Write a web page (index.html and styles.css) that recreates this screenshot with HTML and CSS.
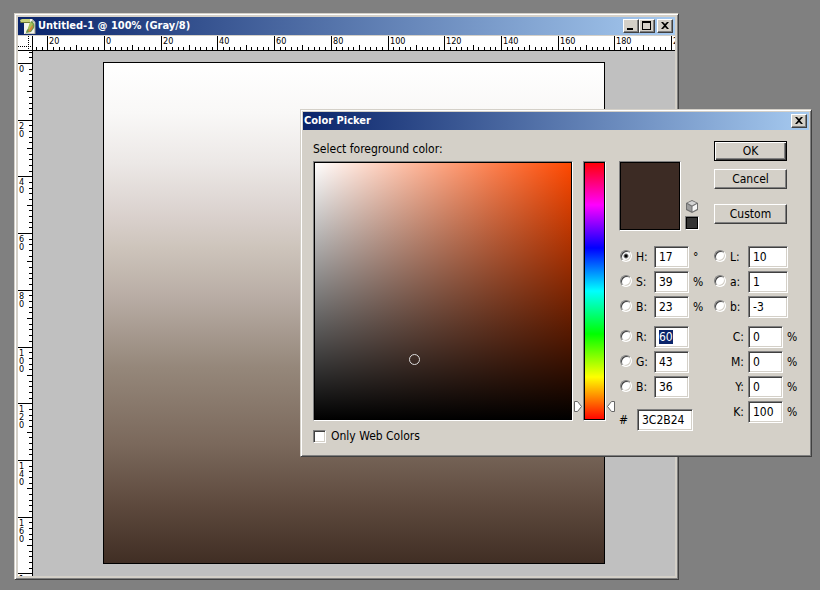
FILE: index.html
```html
<!DOCTYPE html>
<html lang="en">
<head>
<meta charset="utf-8">
<title>Untitled-1 @ 100% (Gray/8)</title>
<link rel="stylesheet" href="styles.css">
</head>
<body>
<main class="desktop">
  <section class="window document" aria-label="Untitled-1">
    <header class="titlebar">
      <svg class="doc-icon" viewBox="0 0 16 16" aria-hidden="true">
        <path d="M4 1h8l3 3v12H4z" fill="#f4f4ec"/>
        <path d="M12 1v3h3z" fill="#b9bba8"/>
        <path d="M15 4v12H5" fill="none" stroke="#9a9a8c"/>
        <path d="M0 2l2-1h8v4H1z" fill="#c9d27c"/>
        <path d="M0 4h10v1H1z" fill="#6f7c35"/>
        <path d="M11 3c3 1 4 4 3 7l-3 4-5 1c0-3 2-4 3-6z" fill="#6f9a48"/>
        <path d="M12 6l1 3-3 5-2-1z" fill="#d9823a"/>
        <path d="M10 4l3 2-4 6-1-2z" fill="#a9c258"/>
      </svg>
      <h1 class="caption">Untitled-1 @ 100% (Gray/8)</h1>
      <div class="caption-buttons">
        <button class="caption-button" aria-label="Minimize"><svg viewBox="0 0 12 10"><path d="M2 7h6v2H2z"/></svg></button>
        <button class="caption-button" aria-label="Maximize"><svg viewBox="0 0 12 10"><path d="M1 0h9v9H1zM2 2v6h7V2z" fill-rule="evenodd"/></svg></button>
        <button class="caption-button close" aria-label="Close"><svg viewBox="0 0 12 10"><path d="M2 1h2l2 2 2-2h2L7 4.500l3 3.500H8L6 6 4 8H2l3-3.500z"/></svg></button>
      </div>
    </header>
    <div class="workspace">
      <div class="ruler-corner"></div>
      <svg class="ruler" id="ruler-x" aria-hidden="true"></svg>
      <svg class="ruler" id="ruler-y" aria-hidden="true"></svg>
      <div class="pasteboard"><div class="artwork"></div></div>
    </div>
  </section>

  <section class="window dialog" role="dialog" aria-labelledby="picker-title">
    <header class="titlebar">
      <h2 class="caption" id="picker-title">Color Picker</h2>
      <div class="caption-buttons">
        <button class="caption-button close" aria-label="Close"><svg viewBox="0 0 12 10"><path d="M2 1h2l2 2 2-2h2L7 4.500l3 3.500H8L6 6 4 8H2l3-3.500z"/></svg></button>
      </div>
    </header>
    <form class="picker">
      <div class="selectors">
        <p class="prompt">Select foreground color:</p>
        <div class="color-field well"><span class="marker"></span></div>
        <div class="hue">
          <input class="hue-slider well" type="range" min="0" max="360" value="17" aria-label="Hue">
          <svg class="pointer pointer-left" viewBox="0 0 8 11"><path d="M.5.5h3l4 5-4 5h-3z"/></svg>
          <svg class="pointer pointer-right" viewBox="0 0 8 11"><path d="M7.500.5h-3l-4 5 4 5h3z"/></svg>
        </div>
        <label class="web-only"><input class="checkbox" type="checkbox">Only Web Colors</label>
      </div>

      <div class="details">
        <div class="preview">
          <div class="swatch well"></div>
          <div class="web-safe">
            <svg class="cube" viewBox="0 0 12 13" aria-hidden="true">
              <path d="M6 0l6 3v7l-6 3-6-3V3z" fill="#707070"/>
              <path d="M6 1l4.500 2L6 5.500 1.500 3z" fill="#d4d4d4"/>
              <path d="M1 4l4.500 2.500v5L1 9z" fill="#9c9c9c"/>
              <path d="M6.500 6.500L11 4v5l-4.500 2.500z" fill="#f6f6f6"/>
            </svg>
            <div class="safe-swatch well"></div>
          </div>
        </div>
        <div class="actions">
          <button class="button default" type="button">OK</button>
          <button class="button" type="button">Cancel</button>
          <button class="button custom" type="button">Custom</button>
        </div>

        <div class="channels">
          <div class="channel"><input class="radio" type="radio" name="axis" aria-label="Hue axis" checked><label for="h">H:</label><input class="value" id="h" value="17"><span>°</span></div>
          <div class="channel"><input class="radio" type="radio" name="axis" aria-label="Saturation axis"><label for="s">S:</label><input class="value" id="s" value="39"><span>%</span></div>
          <div class="channel"><input class="radio" type="radio" name="axis" aria-label="Brightness axis"><label for="v">B:</label><input class="value" id="v" value="23"><span>%</span></div>
          <div class="channel group-start"><input class="radio" type="radio" name="axis" aria-label="Red axis"><label for="r">R:</label><input class="value" id="r" value="60"></div>
          <div class="channel"><input class="radio" type="radio" name="axis" aria-label="Green axis"><label for="g">G:</label><input class="value" id="g" value="43"></div>
          <div class="channel"><input class="radio" type="radio" name="axis" aria-label="Blue axis"><label for="b">B:</label><input class="value" id="b" value="36"></div>
          <div class="hex"><label for="hex">#</label><input class="value" id="hex" value="3C2B24"></div>
        </div>
        <div class="channels">
          <div class="channel lab"><input class="radio" type="radio" name="axis" aria-label="Lightness axis"><label for="l">L:</label><input class="value" id="l" value="10"></div>
          <div class="channel lab"><input class="radio" type="radio" name="axis" aria-label="a axis"><label for="la">a:</label><input class="value" id="la" value="1"></div>
          <div class="channel lab"><input class="radio" type="radio" name="axis" aria-label="b axis"><label for="lb">b:</label><input class="value" id="lb" value="-3"></div>
          <div class="channel ink group-start"><label for="c">C:</label><input class="value" id="c" value="0"><span>%</span></div>
          <div class="channel ink"><label for="m">M:</label><input class="value" id="m" value="0"><span>%</span></div>
          <div class="channel ink"><label for="y">Y:</label><input class="value" id="y" value="0"><span>%</span></div>
          <div class="channel ink"><label for="k">K:</label><input class="value" id="k" value="100"><span>%</span></div>
        </div>
      </div>
    </form>
  </section>
</main>
<script src="script.js"></script>
</body>
</html>
```
FILE: styles.css
```css
* { box-sizing: border-box; }

:root {
  --face: #d4d0c8;
  --shade: #808080;
  --dark: #404040;
}

body {
  margin: 0;
  background: #808080;
  color: #000;
  font: 12px/16px "DejaVu Sans Condensed", "Noto Sans", sans-serif;
}

h1, h2, p { margin: 0; }

button, input { font: inherit; color: inherit; }

.desktop {
  position: relative;
  min-height: 100vh;
  overflow: hidden;
}

/* Window frames */
.window {
  position: absolute;
  background: var(--face);
  border: 1px solid;
  border-color: var(--face) var(--dark) var(--dark) var(--face);
  box-shadow: inset 1px 1px #fff, inset -1px -1px var(--shade);
}

.document {
  inset: 13px 141px 10px 14px;
  display: flex;
  flex-direction: column;
  padding: 3px;
}

.dialog {
  left: 300px;
  top: 109px;
  padding: 2px;
}

.titlebar {
  display: flex;
  align-items: center;
  height: 18px;
  padding: 0 2px 0 1px;
  background: linear-gradient(90deg, #0a246a, #a6caf0);
}

.caption {
  flex: 1;
  color: #fff;
  font-size: 11px;
  line-height: 18px;
  font-weight: bold;
}

.doc-icon {
  width: 16px;
  height: 16px;
  margin: 0 2px 0 1px;
}

.caption-buttons { display: flex; }

.caption-button {
  width: 16px;
  height: 14px;
  padding: 1px;
  background: var(--face);
  border: 1px solid;
  border-color: #fff var(--dark) var(--dark) #fff;
  box-shadow: inset -1px -1px var(--shade);
}

.caption-button svg {
  display: block;
  width: 12px;
  height: 10px;
}

.caption-button + .close { margin-left: 2px; }

/* Document */
.workspace {
  flex: 1;
  display: grid;
  grid-template: 15px minmax(0, 1fr) / 15px minmax(0, 1fr);
  margin-top: 1px;
  overflow: hidden;
}

.ruler,
.ruler-corner {
  width: 100%;
  height: 100%;
  background: #fff;
}

.ruler {
  font-size: 9px;
  shape-rendering: crispEdges;
}

#ruler-x, .ruler-corner { border-bottom: 1px solid #000; }
#ruler-y, .ruler-corner { border-right: 1px solid #000; }

.ruler-corner {
  background:
    repeating-linear-gradient(90deg, #000 0 1px, #fff 1px 2px) 0 10px / 100% 1px no-repeat,
    repeating-linear-gradient(#000 0 1px, #fff 1px 2px) 10px 0 / 1px 100% no-repeat,
    #fff;
}

.pasteboard {
  padding: 11px 70px;
  background: #c0c0c0;
}

.artwork {
  height: 502px;
  border: 1px solid #000;
  background: linear-gradient(#fff, #f9f8f7 10%, #ece8e6 20%, #d9d0cc 31%, #cdc4bb 37%, #b8aca4 47%, #95877a 61%, #7b695c 76%, #5c483c 89%, #402e24);
}

/* Picker */
.well {
  border: 1px solid;
  border-color: var(--shade) #fff #fff var(--shade);
  box-shadow: inset 0 0 0 1px #000;
}

.picker {
  display: flex;
  gap: 13px;
  padding: 10px 21px 10px 10px;
}

.selectors {
  display: grid;
  grid-template-columns: 260px 23px;
  column-gap: 10px;
  align-content: start;
}

.prompt,
.web-only { grid-column: 1 / -1; }

.prompt {
  height: 21px;
  line-height: 18px;
}

.color-field {
  position: relative;
  height: 260px;
  background: linear-gradient(transparent, #000), linear-gradient(90deg, #fff, #ff4800);
}

.marker {
  position: absolute;
  left: 39%;
  top: 77%;
  width: 11px;
  height: 11px;
  margin: -7px -6px;
  border: 1px solid #ddd;
  border-radius: 50%;
}

.hue { position: relative; }

.hue-slider {
  display: block;
  appearance: none;
  writing-mode: vertical-lr;
  direction: rtl;
  width: 100%;
  height: 260px;
  margin: 0;
  background: linear-gradient(#f00, #f0f, #00f, #0ff, #0f0, #ff0, #f00);
}

.hue-slider::-webkit-slider-thumb {
  appearance: none;
  opacity: 0;
}

.pointer {
  position: absolute;
  top: 240px;
  width: 8px;
  height: 11px;
  fill: #fff;
  stroke: #666;
}

.pointer-left { left: -9px; }
.pointer-right { right: -9px; }

.web-only {
  display: flex;
  align-items: center;
  gap: 5px;
  margin-top: 7px;
}

.checkbox {
  appearance: none;
  width: 13px;
  height: 13px;
  margin: 0;
}

.checkbox,
.value {
  background: #fff;
  border: 1px solid;
  border-color: var(--shade) #fff #fff var(--shade);
  border-radius: 0;
  box-shadow: inset 1px 1px var(--dark), inset -1px -1px var(--face);
}

.details {
  display: grid;
  grid-template-columns: 95px 74px;
  align-content: start;
  row-gap: 22px;
  margin-top: 1px;
}

.preview {
  display: flex;
  align-items: flex-end;
  gap: 4px;
  padding-top: 20px;
  height: 90px;
}

.swatch {
  width: 62px;
  height: 70px;
  background: #3c2b24;
}

.web-safe {
  display: grid;
  justify-items: center;
  gap: 3px;
}

.cube {
  width: 12px;
  height: 13px;
}

.safe-swatch {
  width: 14px;
  height: 14px;
  background: #333;
}

.web-safe, .actions { margin-bottom: 1px; }

.actions {
  display: flex;
  flex-direction: column;
  gap: 8px;
}

.button {
  width: 73px;
  height: 20px;
  padding: 0;
  line-height: 16px;
  background: var(--face);
  border: 1px solid;
  border-color: #fff var(--dark) var(--dark) #fff;
  box-shadow: inset -1px -1px var(--shade);
}

.button.default {
  border-color: #000;
  box-shadow: inset 1px 1px #fff, inset -1px -1px var(--dark), inset -2px -2px var(--shade);
}

.button.custom { margin-top: 7px; }

.channels {
  display: flex;
  flex-direction: column;
  gap: 3px;
  margin-top: -7px;
}

.channel {
  display: grid;
  grid-template-columns: 12px 14px 35px auto;
  align-items: center;
  justify-content: start;
  column-gap: 4px;
  margin-left: 1px;
}

.channel.lab {
  grid-template-columns: 12px 14px 40px;
  margin-left: 0;
}

.channel.ink {
  grid-template-columns: 30px 35px auto;
  margin-left: 0;
}

.channel.ink label { text-align: right; }

.group-start { margin-top: 5px; }

.value {
  width: 100%;
  height: 22px;
  padding: 0 4px;
  outline: none;
  caret-color: transparent;
}

.value::selection {
  background: #0a246a;
  color: #fff;
}

.radio {
  appearance: none;
  width: 12px;
  height: 12px;
  margin: 0 0 2px;
  border: 1px solid;
  border-color: var(--shade) #fff #fff var(--shade);
  border-radius: 50%;
  background: #fff;
  box-shadow: inset 1px 1px var(--dark), inset -1px -1px var(--face);
}

.radio:checked { background: radial-gradient(circle, #000 1px, #fff 3px); }

.hex {
  display: grid;
  grid-template-columns: 14px 56px;
  align-items: center;
  column-gap: 4px;
  margin-top: 8px;
}
```
FILE: script.js
```js
const NS = "http://www.w3.org/2000/svg";
const STEP = 56.7 / 10;

function add(parent, name, attrs, text) {
  const node = document.createElementNS(NS, name);
  for (const key in attrs) node.setAttribute(key, attrs[key]);
  if (text) node.textContent = text;
  parent.append(node);
  return node;
}

// One tick every 2 units, a longer one at 10, and a labelled full line at 20.
function drawRuler(id, origin, vertical) {
  const svg = document.getElementById(id);
  const box = svg.getBoundingClientRect();
  const length = vertical ? box.height : box.width;
  for (let i = -Math.floor(origin / STEP); origin + i * STEP < length; i++) {
    const at = Math.round(origin + i * STEP);
    const size = i % 10 === 0 ? 14 : i % 5 === 0 ? 5 : 3;
    add(svg, "rect", vertical
      ? { x: 14 - size, y: at, width: size, height: 1 }
      : { x: at, y: 14 - size, width: 1, height: size });
    if (i % 10) continue;
    const label = String(Math.abs(i * 2));
    if (vertical) {
      // Digits are stacked; those below the end of the ruler are left out.
      const text = add(svg, "text", {});
      [...label].forEach((digit, n) => {
        if (at + n * 8 < length) add(text, "tspan", { x: 1, y: at + 9 + n * 8 }, digit);
      });
    } else {
      add(svg, "text", { x: at + 2, y: 8 }, label);
    }
  }
}

drawRuler("ruler-x", 71, false);
drawRuler("ruler-y", 12, true);

const red = document.getElementById("r");
red.focus();
red.select();
```
